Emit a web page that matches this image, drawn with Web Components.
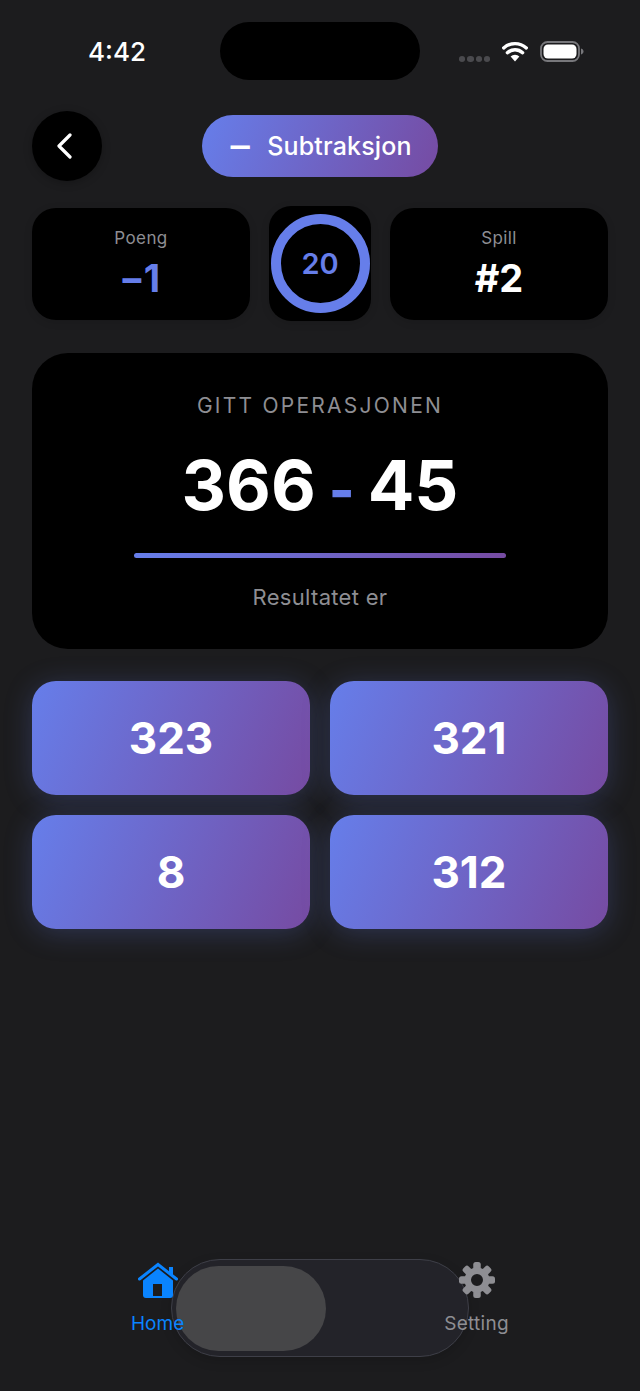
<!DOCTYPE html>
<html>
<head>
<meta charset="utf-8">
<title>Subtraksjon</title>
<style>
  html, body { margin: 0; background: #1c1c1e; }
  body { font-family: Inter, "Liberation Sans", sans-serif; }
</style>
</head>
<body>
<quiz-screen></quiz-screen>

<script>
const GRADIENT = 'linear-gradient(112deg, #667eea 0%, #764ba2 100%)';

class StatusBar extends HTMLElement {
  constructor () {
    super();
    this.attachShadow({ mode: 'open' }).innerHTML = /*html*/ `
      <style>
        :host {
          display: grid;
          grid-template-columns: 1fr 200px 1fr;
          padding-top: 22px;
          color: #fff;
        }
        .time {
          font-size: 26px;
          font-weight: 500;
          padding-left: 88px;
          padding-top: 1px;
          line-height: 58px;
          height: 58px;
          box-sizing: border-box;
        }
        .island {
          height: 58px;
          background: #000;
          border-radius: 29px;
        }
        .icons {
          display: flex;
          align-items: flex-start;
          padding: 19px 0 0 39px;
        }
        .dots { display: flex; gap: 2px; margin-top: 15px; }
        .dots i { width: 6.25px; height: 5.5px; border-radius: 50%; background: #4a4a4e; }
        .wifi { margin-left: 12px; }
        .battery { margin-left: 12px; }
      </style>
      <div class="time">4:42</div>
      <div class="island"></div>
      <div class="icons">
        <div class="dots"><i></i><i></i><i></i><i></i></div>
        <svg class="wifi" width="26" height="21" viewBox="0 0 26 21">
          <path d="M13 20.5 8.6 15.4a6.400 6.400 0 0 1 8.800 0Z" fill="#fff"/>
          <path d="M5.400 11.700a11.200 11.200 0 0 1 15.200 0M1.700 6.900a17 17 0 0 1 22.600 0" fill="none" stroke="#fff" stroke-width="3.400" stroke-linecap="round"/>
        </svg>
        <svg class="battery" width="44" height="21" viewBox="0 0 44 21">
          <rect x="1" y="1" width="38" height="19" rx="6.500" fill="none" stroke="#77777b" stroke-width="1.800"/>
          <rect x="3.500" y="3.500" width="33" height="14" rx="4.500" fill="#fff"/>
          <path d="M41 7.500c1.600.4 2.500 1.600 2.500 3s-.9 2.600-2.500 3Z" fill="#77777b"/>
        </svg>
      </div>
    `;
  }
}
customElements.define('status-bar', StatusBar);

class QuizHeader extends HTMLElement {
  constructor () {
    super();
    this.attachShadow({ mode: 'open' }).innerHTML = /*html*/ `
      <style>
        :host {
          display: grid;
          grid-template-columns: 1fr auto 1fr;
          align-items: center;
          padding: 0 32px;
          margin-top: 31px;
          color: #fff;
        }
        .back {
          width: 70px;
          height: 70px;
          border-radius: 50%;
          background: #000;
          display: flex;
          align-items: center;
          justify-content: center;
          box-shadow: 0 2px 8px rgba(0,0,0,0.25);
        }
        .back svg { margin-right: 4px; }
        .pill {
          display: flex;
          align-items: center;
          gap: 16px;
          height: 62px;
          padding: 0 26px 0 27px;
          border-radius: 31px;
          background: ${GRADIENT};
          font-size: 25px;
          font-weight: 500;
          letter-spacing: 0.15px;
        }
        .op {
          width: 22px;
          display: flex;
          justify-content: center;
          font-size: 42px;
          font-weight: 400;
          line-height: 54px;
          padding-bottom: 4px;
        }
      </style>
      <div class="back">
        <svg width="18" height="26" viewBox="0 0 18 26">
          <path d="M14 2 3 13l11 11" fill="none" stroke="#fff" stroke-width="3.200" stroke-linecap="round" stroke-linejoin="round"/>
        </svg>
      </div>
      <div class="pill"><span class="op">−</span><span>Subtraksjon</span></div>
      <div></div>
    `;
  }
}
customElements.define('quiz-header', QuizHeader);

class StatCard extends HTMLElement {
  constructor () {
    super();
    this.attachShadow({ mode: 'open' }).innerHTML = /*html*/ `
      <style>
        :host {
          flex: 1;
          display: flex;
          flex-direction: column;
          align-items: center;
          height: 112px;
          box-sizing: border-box;
          padding-top: 20px;
          background: #000;
          border-radius: 24px;
          box-shadow: 0 2px 8px rgba(0,0,0,0.12);
        }
        .label { font-size: 17px; line-height: 20px; letter-spacing: 0.4px; color: #8e8e93; }
        .value {
          font-size: 38px;
          line-height: 46px;
          margin-top: 7px;
          font-weight: 700;
          color: var(--value-color, #fff);
          letter-spacing: var(--value-spacing, 0);
          margin-right: var(--value-shift, 0);
        }
      </style>
      <div class="label"><slot name="label"></slot></div>
      <div class="value"><slot name="value"></slot></div>
    `;
  }
}
customElements.define('stat-card', StatCard);

class CountdownRing extends HTMLElement {
  constructor () {
    super();
    this.attachShadow({ mode: 'open' }).innerHTML = /*html*/ `
      <style>
        :host {
          display: flex;
          align-items: center;
          justify-content: center;
          width: 102px;
          height: 115px;
          background: #000;
          border-radius: 22px;
          box-shadow: 0 2px 8px rgba(0,0,0,0.12);
        }
        .ring {
          width: 99px;
          height: 99px;
          box-sizing: border-box;
          border: 10px solid #667eea;
          border-radius: 50%;
          display: flex;
          align-items: center;
          justify-content: center;
          color: #667eea;
          font-size: 29px;
          font-weight: 600;
        }
      </style>
      <div class="ring"><slot></slot></div>
    `;
  }
}
customElements.define('countdown-ring', CountdownRing);

class QuestionCard extends HTMLElement {
  constructor () {
    super();
    this.attachShadow({ mode: 'open' }).innerHTML = /*html*/ `
      <style>
        :host {
          display: flex;
          flex-direction: column;
          align-items: center;
          height: 296px;
          box-sizing: border-box;
          margin: 32px 32px 0;
          padding-top: 40px;
          background: #000;
          border-radius: 36px;
        }
        .title {
          font-size: 21px;
          line-height: 26px;
          letter-spacing: 2.250px;
          color: #8e8e93;
        }
        .sum {
          display: flex;
          align-items: baseline;
          gap: 13px;
          font-size: 69px;
          line-height: 82px;
          margin-top: 25px;
          font-weight: 700;
          color: #fff;
        }
        .sum .dash { color: #667eea; font-size: 55px; font-weight: 800; }
        .line {
          width: 372px;
          height: 5px;
          border-radius: 3px;
          margin-top: 22px;
          background: linear-gradient(90deg, #667eea, #764ba2);
        }
        .hint {
          font-size: 22px;
          line-height: 26px;
          letter-spacing: 0.300px;
          margin-top: 26px;
          color: #8e8e93;
        }
      </style>
      <div class="title">GITT OPERASJONEN</div>
      <div class="sum"><span>366</span><span class="dash">-</span><span>45</span></div>
      <div class="line"></div>
      <div class="hint">Resultatet er</div>
    `;
  }
}
customElements.define('question-card', QuestionCard);

class AnswerButton extends HTMLElement {
  constructor () {
    super();
    this.attachShadow({ mode: 'open' }).innerHTML = /*html*/ `
      <style>
        :host {
          display: flex;
          align-items: center;
          justify-content: center;
          height: 114px;
          border-radius: 24px;
          background: ${GRADIENT};
          box-shadow: 0 4px 28px rgba(102,126,234,0.25);
          color: #fff;
          font-size: 44px;
          font-weight: 700;
        }
      </style>
      <slot></slot>
    `;
  }
}
customElements.define('answer-button', AnswerButton);

class TabBar extends HTMLElement {
  constructor () {
    super();
    this.attachShadow({ mode: 'open' }).innerHTML = /*html*/ `
      <style>
        :host {
          display: flex;
          justify-content: space-between;
          position: relative;
          margin-top: auto;
          padding: 0 131px 56px;
          font-size: 19px;
        }
        .track {
          position: absolute;
          left: 171px;
          top: -3px;
          width: 298px;
          height: 98px;
          box-sizing: border-box;
          border: 1px solid #3e3f48;
          border-radius: 49px;
          background: #232329;
          box-shadow: 0 4px 12px rgba(0,0,0,0.15);
        }
        .thumb {
          position: absolute;
          left: 4px;
          top: 6px;
          width: 150px;
          height: 85px;
          border-radius: 43px;
          background: #464648;
        }
        .tab {
          position: relative;
          display: flex;
          flex-direction: column;
          align-items: center;
          line-height: 22px;
          color: #8e8e93;
          letter-spacing: 0.3px;
        }
        .tab.on { color: #0a84ff; letter-spacing: 0; }
        svg { display: block; margin-bottom: 15px; }
      </style>
      <div class="track"><div class="thumb"></div></div>
      <div class="tab on">
        <svg width="40" height="36" viewBox="0 0 40 36">
          <path d="M5 18.500 20 6.500 35 18.500V33a3 3 0 0 1-3 3H8a3 3 0 0 1-3-3Z" fill="#0a84ff"/>
          <rect x="15" y="22" width="9" height="12" fill="#1c1c1e"/>
          <rect x="31" y="5" width="4" height="8" fill="#0a84ff"/>
          <path d="M1.500 17 20 2.500 38.500 17" fill="none" stroke="#0a84ff" stroke-width="3" stroke-linecap="round"/>
        </svg>
        <span>Home</span>
      </div>
      <div class="tab">
        <svg width="36" height="36" viewBox="-18 -18 36 36">
          <g fill="#8e8e93">
            <rect x="-3.750" y="-18" width="7.500" height="36" rx="2.500"/>
            <rect x="-3.750" y="-18" width="7.500" height="36" rx="2.500" transform="rotate(45)"/>
            <rect x="-3.750" y="-18" width="7.500" height="36" rx="2.500" transform="rotate(90)"/>
            <rect x="-3.750" y="-18" width="7.500" height="36" rx="2.500" transform="rotate(135)"/>
          </g>
          <circle r="9.250" fill="#1c1c1e" stroke="#8e8e93" stroke-width="6.500"/>
        </svg>
        <span>Setting</span>
      </div>
    `;
  }
}
customElements.define('tab-bar', TabBar);

class QuizScreen extends HTMLElement {
  constructor () {
    super();
    this.attachShadow({ mode: 'open' }).innerHTML = /*html*/ `
      <style>
        :host {
          display: flex;
          flex-direction: column;
          height: 1391px;
          overflow: hidden;
          background: #1c1c1e;
        }
        .stats {
          display: flex;
          align-items: center;
          gap: 19px;
          padding: 0 32px;
          margin-top: 25px;
        }
        .answers {
          display: grid;
          grid-template-columns: 1fr 1fr;
          gap: 20px;
          padding: 0 32px;
          margin-top: 32px;
        }
      </style>
      <status-bar></status-bar>
      <quiz-header></quiz-header>
      <div class="stats">
        <stat-card style="--value-color: #667eea; --value-spacing: -1px; --value-shift: 4px">
          <span slot="label">Poeng</span>
          <span slot="value">−1</span>
        </stat-card>
        <countdown-ring>20</countdown-ring>
        <stat-card>
          <span slot="label">Spill</span>
          <span slot="value">#2</span>
        </stat-card>
      </div>
      <question-card></question-card>
      <div class="answers">
        <answer-button>323</answer-button>
        <answer-button>321</answer-button>
        <answer-button>8</answer-button>
        <answer-button>312</answer-button>
      </div>
      <tab-bar></tab-bar>
    `;
  }
}
customElements.define('quiz-screen', QuizScreen);
</script>
</body>
</html>
